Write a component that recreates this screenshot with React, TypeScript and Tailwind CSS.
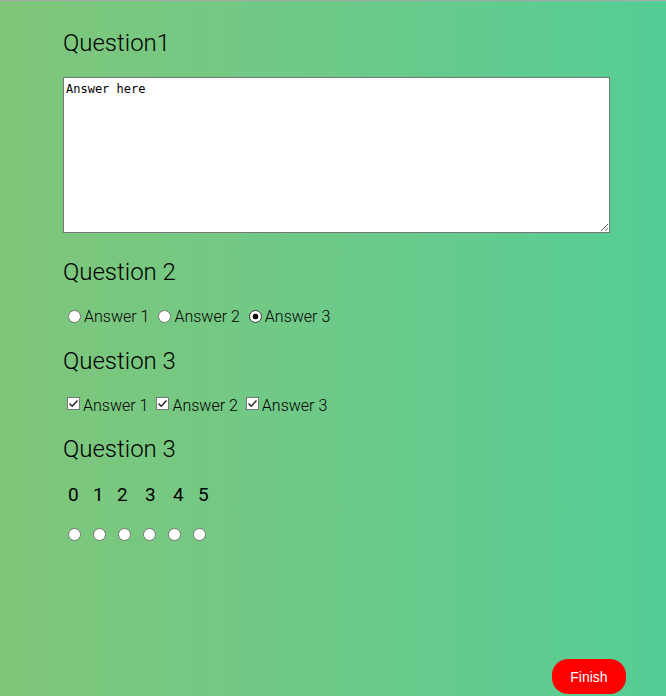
import React from 'react';

const answers = ['Answer 1', 'Answer 2', 'Answer 3'];
const scale = [
  { n: 0, w: 'w-[25px]' },
  { n: 1, w: 'w-[24px]' },
  { n: 2, w: 'w-[28px]' },
  { n: 3, w: 'w-[28px]' },
  { n: 4, w: 'w-[25px]' },
  { n: 5, w: '' },
];

function Radio({ name, checked }: { name: string; checked?: boolean }) {
  return (
    <input
      type="radio"
      name={name}
      defaultChecked={checked}
      className="appearance-none inline-block w-[13px] h-[13px] rounded-full border border-[#767676] bg-white m-[3px_3px_0_5px] align-[-1px] checked:border-[#333] checked:bg-[radial-gradient(circle,#000_0,#000_2.5px,#fff_3.2px)]"
    />
  );
}

function Check() {
  return (
    <span className="relative inline-block w-[13px] h-[13px] m-[3px_3px_3px_4px] align-[-2px]">
      <input type="checkbox" defaultChecked className="appearance-none block w-[13px] h-[13px] border border-[#767676] bg-white" />
      <svg className="absolute left-0 top-0 pointer-events-none" width="13" height="13" viewBox="0 0 13 13">
        <path d="M2.5 6.5 L5.2 9.2 L10.5 3.5" fill="none" stroke="#222" strokeWidth="1.4" />
      </svg>
    </span>
  );
}

export default function App() {
  return (
    <div className="h-[696px] flex flex-col border-t border-[#a9a9a9] bg-gradient-to-r from-[#80c67a] to-[#54cd96] font-['Roboto',sans-serif] font-light text-black">
      <div className="pl-[63px] pt-[28px]">
        <h2 className="text-[24px] leading-[28px]">Question1</h2>
        <textarea
          defaultValue="Answer here"
          className="block mt-[20px] w-[547px] h-[156px] border border-[#767676] bg-white px-[2px] py-[4px] font-['DejaVu_Sans_Mono',monospace] text-[12px] font-normal leading-[15px]"
        />

        <h2 className="mt-[25px] text-[24px] leading-[28px]">Question 2</h2>
        <div className="mt-[21px] text-[16px] leading-[20px]">
          {answers.map((a, i) => (
            <label key={a} className="mr-[4px]">
              <Radio name="q2" checked={i === 2} />
              {a}
            </label>
          ))}
        </div>

        <h2 className="mt-[20px] text-[24px] leading-[28px]">Question 3</h2>
        <div className="mt-[19px] text-[16px] leading-[20px]">
          {answers.map((a) => (
            <label key={a} className="mr-[4px]">
              <Check />
              {a}
            </label>
          ))}
        </div>

        <h2 className="mt-[19px] text-[24px] leading-[28px]">Question 3</h2>
        <div className="mt-[21px] flex text-[19px] font-normal leading-[22px] pl-[5px]">
          {scale.map((s) => (
            <span key={s.n} className={s.w}>{s.n}</span>
          ))}
        </div>
        <div className="mt-[19px] flex gap-[4px]">
          {scale.map((s) => (
            <Radio key={s.n} name="q4" />
          ))}
        </div>
      </div>

      <button className="mt-auto mb-[2px] mr-[40px] self-end w-[74px] h-[35px] pt-[2px] rounded-[16px] bg-[#ff0000] text-white font-['Liberation_Sans',sans-serif] font-normal text-[14px]">
        Finish
      </button>
    </div>
  );
}
